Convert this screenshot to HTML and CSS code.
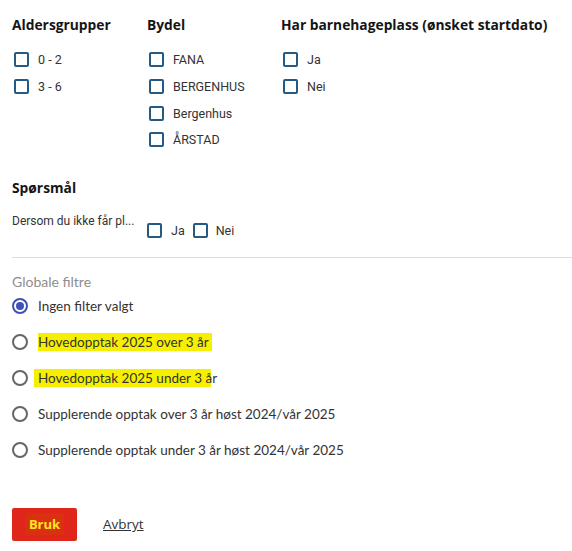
FILE: index.html
```html
<!DOCTYPE html>
<html lang="no">
<head>
<meta charset="utf-8">
<title>Filtre</title>
<link rel="stylesheet" href="styles.css">
</head>
<body>
<div class="page">
  <div class="filters">
    <section class="group">
      <h3 class="heading">Aldersgrupper</h3>
      <ul class="checks">
        <li class="check"><span class="box"></span>0 - 2</li>
        <li class="check"><span class="box"></span>3 - 6</li>
      </ul>
    </section>
    <section class="group">
      <h3 class="heading">Bydel</h3>
      <ul class="checks">
        <li class="check"><span class="box"></span>FANA</li>
        <li class="check"><span class="box"></span>BERGENHUS</li>
        <li class="check"><span class="box"></span>Bergenhus</li>
        <li class="check"><span class="box"></span>ÅRSTAD</li>
      </ul>
    </section>
    <section class="group">
      <h3 class="heading">Har barnehageplass (ønsket startdato)</h3>
      <ul class="checks">
        <li class="check"><span class="box"></span>Ja</li>
        <li class="check"><span class="box"></span>Nei</li>
      </ul>
    </section>
  </div>

  <section class="question">
    <h3 class="heading">Spørsmål</h3>
    <div class="qrow">
      <span class="qlabel">Dersom du ikke får pl...</span>
      <div class="qopts">
        <span class="qopt"><span class="box"></span>Ja</span>
        <span class="qopt"><span class="box"></span>Nei</span>
      </div>
    </div>
  </section>

  <div class="divider"></div>

  <section class="global">
    <div class="glabel">Globale filtre</div>
    <ul class="radios">
      <li class="radio-row"><span class="radio selected"></span><span>Ingen filter valgt</span></li>
      <li class="radio-row"><span class="radio"></span><span class="hl">Hovedopptak 2025 over 3 år</span></li>
      <li class="radio-row"><span class="radio"></span><span class="hl hl2">Hovedopptak 2025 under 3 år</span></li>
      <li class="radio-row"><span class="radio"></span><span>Supplerende opptak over 3 år høst 2024/vår 2025</span></li>
      <li class="radio-row"><span class="radio"></span><span>Supplerende opptak under 3 år høst 2024/vår 2025</span></li>
    </ul>
  </section>

  <div class="actions">
    <button class="btn" type="button"><span class="btn-text">Bruk</span></button>
    <a class="link" href="#">Avbryt</a>
  </div>
</div>
</body>
</html>
```
FILE: styles.css
```css
* { box-sizing: border-box; }
html, body { margin: 0; padding: 0; background: #fff; }
body { font-family: Roboto, "Liberation Sans", sans-serif; color: #333; }

.page { padding: 15px 0 0 12px; }

.heading {
  margin: 0;
  font-family: "Open Sans", sans-serif;
  font-weight: 700;
  font-size: 13.8px;
  line-height: 20px;
  color: #151515;
  white-space: nowrap;
}

.filters {
  display: grid;
  grid-template-columns: 135px 134px 1fr;
}

.checks { list-style: none; margin: 11.67px 0 0 0; padding: 0; }
.check {
  display: flex;
  align-items: center;
  height: 26.67px;
  font-size: 12.5px;
  color: #333;
}
.box {
  display: inline-block;
  width: 15px;
  height: 15px;
  border: 2px solid #235a86;
  border-radius: 2px;
  flex: none;
  margin-left: 2px;
  margin-right: 9px;
}

.question { margin-top: 24.67px; }
.qrow { display: flex; align-items: flex-start; margin-top: 15px; }
.qlabel { width: 135px; font-size: 12px; line-height: 16px; color: #333; white-space: nowrap; }
.qopts { display: flex; align-items: center; margin-top: 10px; font-size: 12.5px; }
.qopt { display: flex; align-items: center; margin-right: 8px; }
.qopt .box { margin-left: 0; margin-right: 9px; }
.qopt + .qopt .box { margin-right: 8px; }

.divider { height: 1px; background: #dcdcdc; margin-top: 19px; }

.global { font-family: Lato, "Open Sans", sans-serif; }
.glabel { margin-top: 15px; font-size: 14px; line-height: 18px; color: #8e8e8e; }
.radios { list-style: none; margin: 7px 0 0 0; padding: 0; display: flex; flex-direction: column; gap: 20px; }
.radio-row { display: flex; align-items: center; height: 16px; font-size: 13.5px; color: #333; }
.radio {
  width: 16px;
  height: 16px;
  border-radius: 50%;
  border: 2px solid #666;
  flex: none;
  margin-right: 10px;
  display: flex;
  align-items: center;
  justify-content: center;
}
.radio.selected { border-color: #3f51b5; }
.radio.selected::after {
  content: "";
  width: 8px;
  height: 8px;
  border-radius: 50%;
  background: #3f51b5;
}
.hl { background: #f6f000; padding: 1px 3px 1px 0; }
.hl2 {
  background: linear-gradient(to right, #f6f000 95%, transparent 95%);
  margin-left: -4px;
  padding-left: 4px;
}

.actions { display: flex; align-items: center; margin-top: 50px; }
.btn {
  width: 65px;
  height: 33px;
  border: none;
  border-radius: 2px;
  background: #e0261a;
  padding: 0;
  font-family: "Open Sans", sans-serif;
  font-weight: 700;
  font-size: 13px;
  color: #ffe81a;
  cursor: pointer;
}
.btn-text { background: #d9300f; padding: 2px 4px; }
.link {
  margin-left: 26px;
  font-family: "Open Sans", sans-serif;
  font-size: 13.5px;
  color: #333;
  text-decoration: underline;
}
```
